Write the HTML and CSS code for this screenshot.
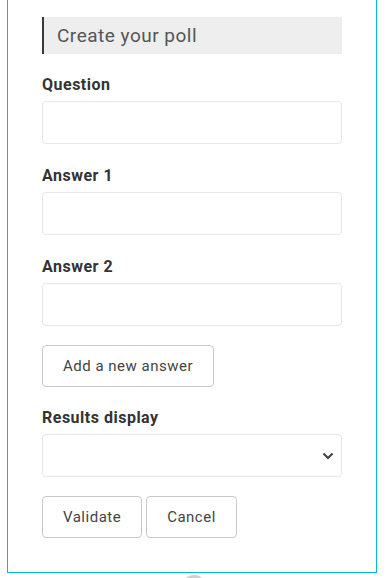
FILE: index.html
```html
<!DOCTYPE html>
<html>
<head>
<meta charset="utf-8">
<link rel="stylesheet" href="styles.css">
</head>
<body>
<div class="panel">
  <h2 class="title">Create your poll</h2>
  <div class="field first">
    <label class="label">Question</label>
    <input class="input" type="text">
  </div>
  <div class="field wide">
    <label class="label">Answer 1</label>
    <input class="input" type="text">
  </div>
  <div class="field wide">
    <label class="label">Answer 2</label>
    <input class="input" type="text">
  </div>
  <div class="field">
    <button class="btn">Add a new answer</button>
  </div>
  <div class="field">
    <label class="label">Results display</label>
    <div class="select">
      <svg class="chev" width="12" height="8" viewBox="0 0 12 8"><path d="M1.5 1.5 L6 6 L10.5 1.5" fill="none" stroke="#444" stroke-width="2.2"/></svg>
    </div>
  </div>
  <div class="field actions">
    <button class="btn">Validate</button>
    <button class="btn">Cancel</button>
  </div>
</div>
<div class="dot"></div>
</body>
</html>
```

FILE: styles.css
```css
html, body {
  margin: 0;
  padding: 0;
  background: #fff;
}
body {
  font-family: Roboto, "Liberation Sans", sans-serif;
  color: #333;
}
.panel {
  box-sizing: border-box;
  width: 370px;
  margin-left: 7px;
  border: 1px solid #00bcd4;
  border-top: 0;
  padding: 17px 34px 34px 34px;
}
.title {
  margin: 0;
  height: 37px;
  box-sizing: border-box;
  background: #eeeeee;
  border-left: 2px solid #3a3a3a;
  padding: 1px 0 0 13px;
  font-size: 19px;
  font-weight: 400;
  letter-spacing: 0.5px;
  line-height: 36px;
  color: #555;
}
.field {
  margin-top: 19px;
  display: flex;
  flex-direction: column;
  align-items: flex-start;
}
.field.wide {
  margin-top: 20px;
}
.label {
  font-size: 16px;
  font-weight: 700;
  letter-spacing: 0.5px;
  line-height: 24px;
  color: #333;
  margin-bottom: 4px;
}
.input, .select {
  box-sizing: border-box;
  width: 300px;
  height: 43px;
  border: 1px solid #e6e6e6;
  border-radius: 4px;
  background: #fff;
  margin: 0;
}
.select {
  display: flex;
  align-items: center;
  justify-content: flex-end;
  padding-right: 7px;
}
.btn {
  box-sizing: border-box;
  height: 42px;
  padding: 0 20px;
  border: 1px solid #c8c8c8;
  border-radius: 4px;
  background: #fff;
  font-family: Roboto, "Liberation Sans", sans-serif;
  font-size: 15px;
  letter-spacing: 0.5px;
  color: #444;
  margin: 0;
}
.actions {
  flex-direction: row;
  gap: 4px;
}
.dot {
  width: 26px;
  height: 26px;
  border-radius: 50%;
  background: #cfcfcf;
  margin: 2px auto 0;
}
```
